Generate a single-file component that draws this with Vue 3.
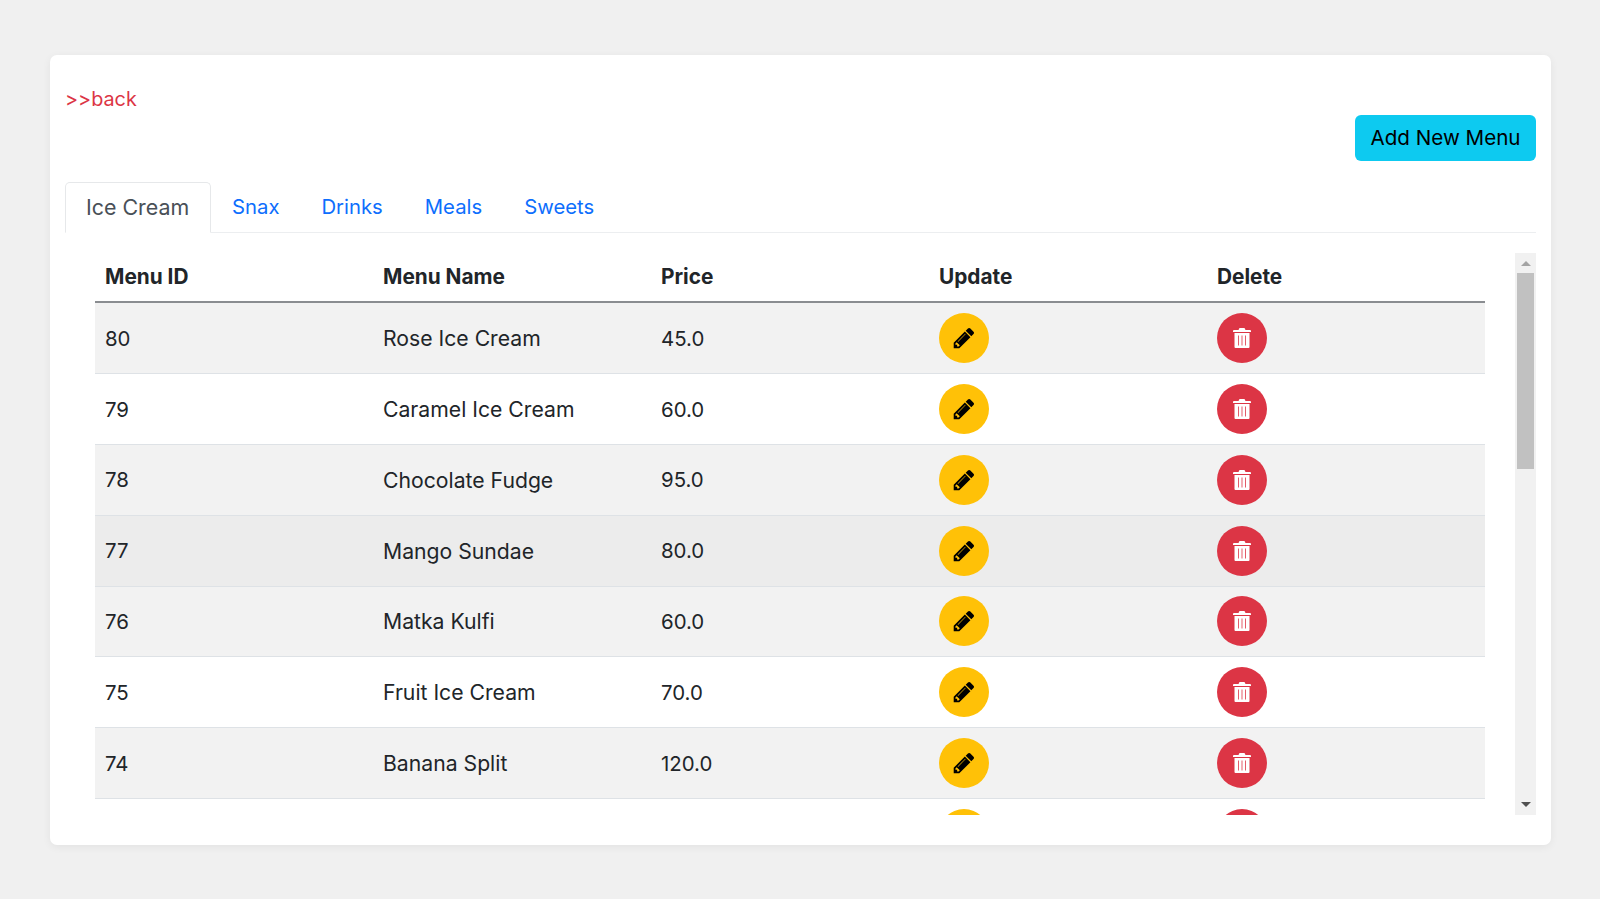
<template>
  <div class="page">
    <div class="card">
      <div class="top-row">
        <a href="#" class="back">&gt;&gt;back</a>
        <button class="add-btn">Add New Menu</button>
      </div>

      <ul class="tabs">
        <li v-for="(tab, i) in tabs" :key="tab" class="tab" :class="{ active: i === 0 }">{{ tab }}</li>
      </ul>

      <div class="table-area">
        <div class="table-wrapper">
          <table>
            <thead>
              <tr>
                <th v-for="header in headers" :key="header">{{ header }}</th>
              </tr>
            </thead>
            <tbody>
              <tr v-for="(row, index) in menu" :key="index" :class="rowClass(index)">
                <td>{{ row.id }}</td>
                <td class="name">{{ row.name }}</td>
                <td>{{ row.price }}</td>
                <td>
                  <button class="round edit">
                    <svg viewBox="0 0 1792 1792" width="24" height="24">
                      <path d="M491 1536l91-91-235-235-91 91v107h128v128h107zm523-928q0-22-22-22-10 0-17 7l-542 542q-7 7-7 17 0 22 22 22 10 0 17-7l542-542q7-7 7-17zm-54-192l416 416-832 832h-416v-416zm683 96q0 53-37 90l-166 166-416-416 166-165q36-38 90-38 53 0 91 38l235 234q37 39 37 91z" fill="#000" />
                    </svg>
                  </button>
                </td>
                <td>
                  <button class="round del">
                    <svg viewBox="0 0 18 20" width="18" height="20">
                      <path d="M6.500 0h5l1 2H17a1 1 0 0 1 1 1v1H0V3a1 1 0 0 1 1-1h4.500z M1.500 5h15v14a1 1 0 0 1-1 1h-13a1 1 0 0 1-1-1z M5 7.500v10h.8v-10z M8.600 7.500v10h.8v-10z M12.200 7.500v10h.8v-10z" fill="#fff" fill-rule="evenodd" />
                    </svg>
                  </button>
                </td>
              </tr>
            </tbody>
          </table>
        </div>

        <div class="scrollbar">
          <span class="arrow up"></span>
          <div class="track">
            <div class="thumb"></div>
          </div>
          <span class="arrow down"></span>
        </div>
      </div>
    </div>
  </div>
</template>

<script setup>
const tabs = ['Ice Cream', 'Snax', 'Drinks', 'Meals', 'Sweets']
const headers = ['Menu ID', 'Menu Name', 'Price', 'Update', 'Delete']

const menu = [
  { id: 80, name: 'Rose Ice Cream', price: '45.0' },
  { id: 79, name: 'Caramel Ice Cream', price: '60.0' },
  { id: 78, name: 'Chocolate Fudge', price: '95.0' },
  { id: 77, name: 'Mango Sundae', price: '80.0' },
  { id: 76, name: 'Matka Kulfi', price: '60.0' },
  { id: 75, name: 'Fruit Ice Cream', price: '70.0' },
  { id: 74, name: 'Banana Split', price: '120.0' },
  { id: null, name: '', price: '' } // only its buttons peek out below the fold
]

// row 77 is under the mouse in the reference
const rowClass = (index) => ({
  odd: index % 2 === 0,
  hovered: index === 3
})
</script>

<style scoped>
.page {
  padding: 55px 49px 54px 50px;
  font-family: Inter, "Open Sans", sans-serif;
  color: #212529;
}

.card {
  background-color: #fff;
  border-radius: 7px;
  box-shadow: 0 2px 8px rgba(0, 0, 0, 0.06);
  padding: 30px 15px;
  height: 790px;
  box-sizing: border-box;
}

.top-row {
  display: flex;
  justify-content: space-between;
  align-items: flex-start;
  height: 76px;
}

.back {
  color: #dc3545;
  text-decoration: none;
  font-size: 19.8px;
  line-height: 29px;
}

.add-btn {
  margin-top: 30px;
  width: 181px;
  height: 46px;
  padding: 0 0 2px;
  background-color: #0dcaf0;
  border: none;
  border-radius: 6px;
  color: #000;
  font-family: inherit;
  font-size: 20.6px;
}

.tabs {
  display: flex;
  list-style: none;
  margin: 21px 0 0;
  padding: 0;
  border-bottom: 1px solid #eceef0;
  height: 50px;
}

.tab {
  padding: 0 21px;
  line-height: 50px;
  font-size: 20.3px;
  color: #0d6efd;
}

.tab.active {
  color: #495057;
  background-color: #fff;
  border: 1px solid #e6e8ea;
  border-bottom-color: #fff;
  border-radius: 5px 5px 0 0;
  padding: 0 20px;
  font-size: 21.4px;
  line-height: 49px;
  box-sizing: border-box;
  margin-bottom: -1px;
  height: 51px;
  width: 146px;
}

.table-area {
  display: flex;
  margin-top: 20px;
  height: 562px;
}

.table-wrapper {
  flex: 1;
  overflow: hidden;
  padding: 0 30px;
}

.scrollbar {
  width: 21px;
  display: flex;
  flex-direction: column;
  align-items: center;
  background-color: #f1f1f1;
}

.arrow {
  width: 0;
  height: 0;
  border-left: 5px solid transparent;
  border-right: 5px solid transparent;
}

.arrow.up {
  margin: 8px 0 7px;
  border-bottom: 5px solid #a3a3a3;
}

.arrow.down {
  margin: 7px 0 8px;
  border-top: 5px solid #505050;
}

.track {
  flex: 1;
  width: 100%;
  padding: 0 2px;
  box-sizing: border-box;
}

.thumb {
  height: 196px;
  background-color: #c1c1c1;
}

table {
  width: 100%;
  table-layout: fixed;
  border-collapse: collapse;
  font-size: 20.4px;
}

th {
  text-align: left;
  font-weight: 700;
  font-size: 20.8px;
  height: 46.4px;
  padding: 0 10px 2px;
  border-bottom: 2px solid #8a8d91;
}

td {
  padding: 0 10px;
  height: 69.8px;
  border-bottom: 1px solid #dee2e6;
}

td.name {
  font-size: 21.2px;
}

tr.odd td {
  background-color: #f2f2f2;
}

tr.hovered td {
  background-color: #ececec;
}

.round {
  display: flex;
  align-items: center;
  justify-content: center;
  width: 50px;
  height: 50px;
  padding: 0;
  border: none;
  border-radius: 50%;
}

.edit {
  background-color: #ffc107;
}

.del {
  background-color: #dc3545;
}
</style>

<style>
body {
  background-color: #f0f0f0;
}
</style>
